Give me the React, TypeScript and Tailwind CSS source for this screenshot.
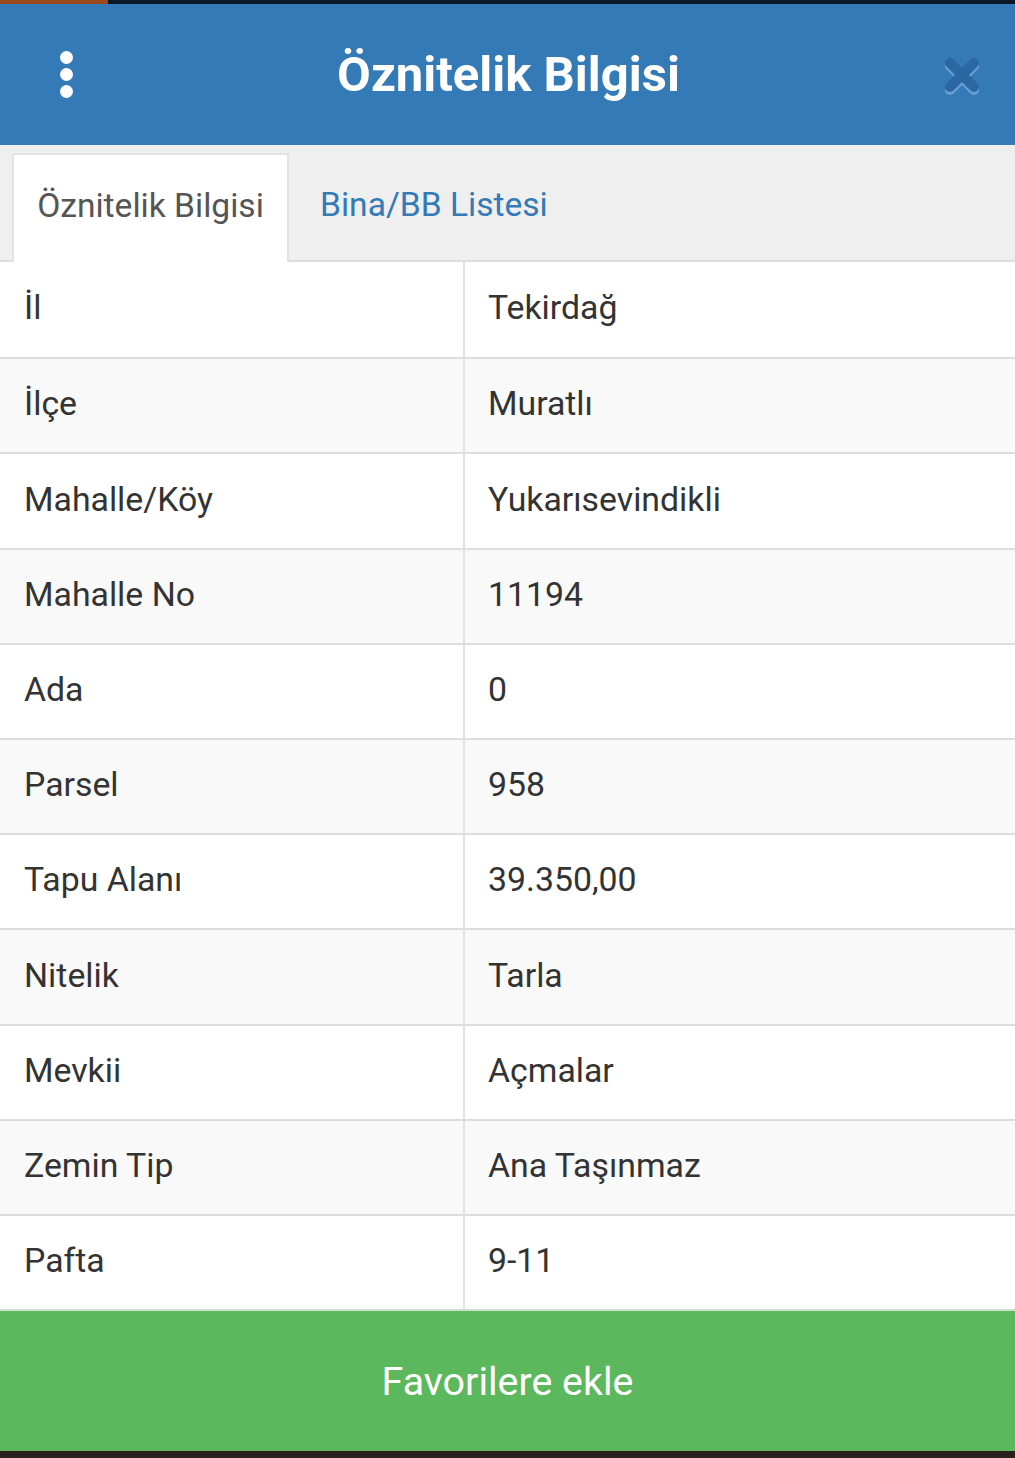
import React from "react";

const rows: [string, string][] = [
  ["İl", "Tekirdağ"],
  ["İlçe", "Muratlı"],
  ["Mahalle/Köy", "Yukarısevindikli"],
  ["Mahalle No", "11194"],
  ["Ada", "0"],
  ["Parsel", "958"],
  ["Tapu Alanı", "39.350,00"],
  ["Nitelik", "Tarla"],
  ["Mevkii", "Açmalar"],
  ["Zemin Tip", "Ana Taşınmaz"],
  ["Pafta", "9-11"],
];

function CloseIcon() {
  return (
    <svg width="44" height="44" viewBox="0 0 44 44">
      <g strokeLinecap="round" strokeWidth="10">
        <path d="M10 13 L34 37 M34 13 L10 37" stroke="#6a9fd3" />
        <path d="M10 10 L34 34 M34 10 L10 34" stroke="#2b67a3" />
      </g>
    </svg>
  );
}

export default function App() {
  return (
    <div className="w-[1015px] h-[1458px] flex flex-col bg-white font-['Roboto',sans-serif]">
      {/* status strip */}
      <div className="h-[4px] flex bg-[#0b1828]">
        <div className="w-[108px] bg-[#9a4a1c]" />
      </div>

      <div className="h-[141px] bg-[#337ab7] flex items-center justify-between pl-[60px] pr-[31px]">
        <div className="flex flex-col gap-[4px]">
          <span className="w-[13px] h-[13px] rounded-full bg-white" />
          <span className="w-[13px] h-[13px] rounded-full bg-white" />
          <span className="w-[13px] h-[13px] rounded-full bg-white" />
        </div>
        <h1 className="text-white text-[49px] font-bold pl-[4px]">Öznitelik Bilgisi</h1>
        <CloseIcon />
      </div>

      <div className="h-[117px] bg-[#efefef] flex items-end pl-[12px] border-b-2 border-[#dedede]">
        <div className="h-[109px] w-[277px] bg-white border-2 border-b-0 border-[#e3e3e3] flex items-center justify-center pb-[4px] text-[33.6px] text-[#555] -mb-[2px]">
          Öznitelik Bilgisi
        </div>
        <div className="h-[109px] flex items-center pl-[31px] text-[33.6px] text-[#337ab7]">Bina/BB Listesi</div>
      </div>

      <div className="flex flex-col">
        {rows.map(([k, v], i) => (
          <div
            key={k}
            className={`flex h-[95.2px] text-[33.8px] text-[#333] ${i > 0 ? "border-t-2 border-[#dddddd]" : ""} ${
              i % 2 === 1 ? "bg-[#f9f9f9]" : "bg-white"
            }`}
          >
            <div className="w-[465px] border-r-2 border-[#e2e2e2] flex items-center pl-[24px] pb-[2px]">{k}</div>
            <div className="flex-1 flex items-center pl-[23px] pb-[2px]">{v}</div>
          </div>
        ))}
      </div>

      <button className="h-[142px] bg-[#5cb85c] border-t-2 border-[#cfe0cf] text-white text-[39.4px] flex items-center justify-center">
        Favorilere ekle
      </button>
      <div className="flex-1 bg-[#2a1f1c]" />
    </div>
  );
}
